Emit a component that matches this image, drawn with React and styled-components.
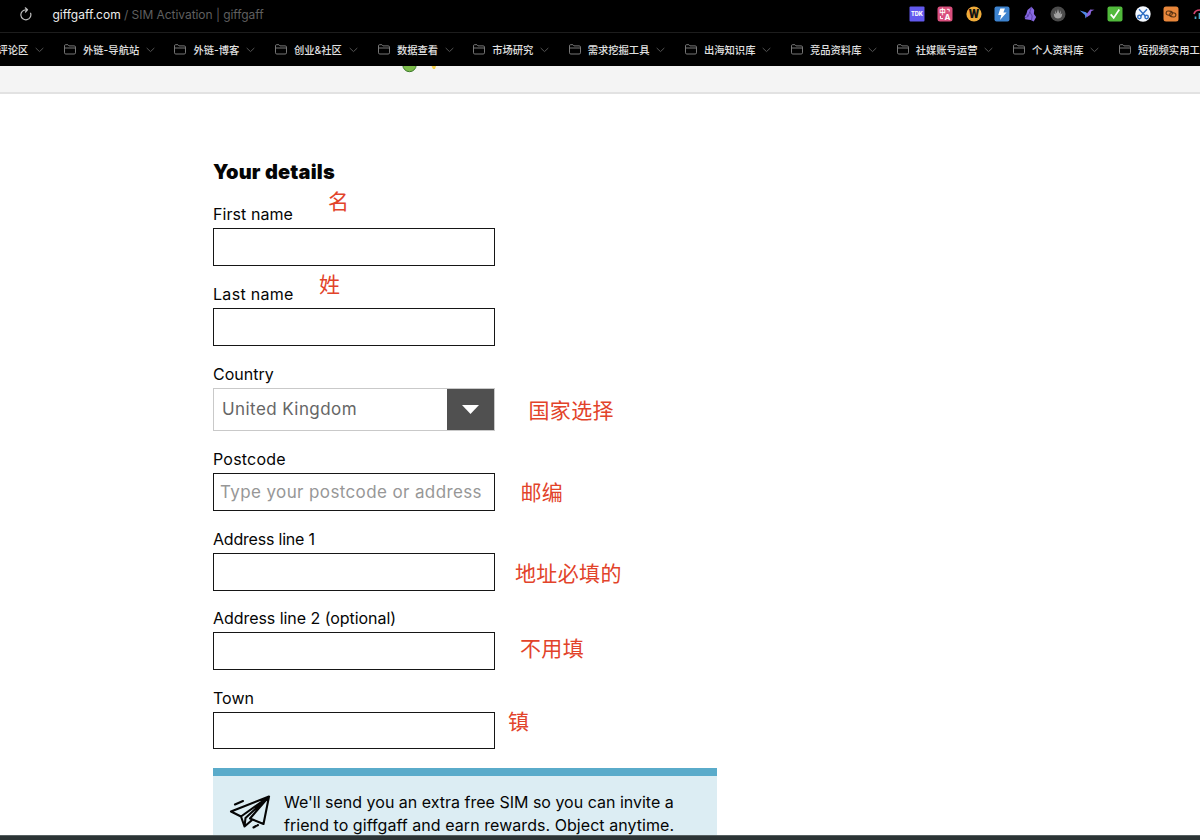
import React from "react";
import styled, { createGlobalStyle } from "styled-components";

const GlobalStyle = createGlobalStyle`
  * {
    box-sizing: border-box;
  }

  body {
    margin: 0;
    background: #fff;
    color: #050505;
    font-family: Inter, "Noto Sans CJK SC", sans-serif;
  }
`;

const Window = styled.div`
  display: flex;
  flex-direction: column;
  height: 840px;
  overflow: hidden;
`;

// Browser chrome

const AddressBar = styled.div`
  display: flex;
  flex: none;
  align-items: center;
  height: 33px;
  padding: 0 0 4px 19px;
  background: #000;
  border-bottom: 1px solid #1d1d1d;
  font-size: 12px;
  white-space: pre;
`;

const Url = styled.span`
  margin-left: 19.5px;
  color: #ededed;
`;

const PageTitle = styled.span`
  color: #5f5f5f;
  letter-spacing: -0.05px;
`;

const Extensions = styled.div`
  display: flex;
  flex: none;
  gap: 12.25px;
  margin: 0 -7.5px 0 auto;

  svg {
    display: block;
  }
`;

const BookmarksBar = styled.nav`
  display: flex;
  flex: none;
  height: 33px;
  align-items: center;
  padding-left: 64px;
  background: #000;
  overflow: hidden;
`;

const Bookmark = styled.div`
  display: flex;
  flex: none;
  align-items: center;
  width: ${(props) => props.$width}px;
  margin-left: ${(props) => (props.$first ? "-85.5px" : "0")};
  color: #e0e0e0;
  font-size: 10.3px;
  font-weight: 500;
  line-height: 16px;
  white-space: nowrap;

  span {
    margin: 0 7px;
  }
`;

// Page

const SiteHeader = styled.header`
  display: flex;
  flex: none;
  height: 28px;
  padding-left: 402px;
  background: #f4f4f4;
  border-bottom: 2px solid #e2e2e2;
`;

const Main = styled.main`
  flex: 1;
  min-height: 0;
  padding: 66px 0 0 213px;
  overflow: hidden;
`;

const Heading = styled.h1`
  margin: 0 0 19px;
  font-size: 20px;
  font-weight: 900;
  line-height: 24px;
  letter-spacing: 0.2px;
`;

const Field = styled.div`
  position: relative;
  width: 282px;
  margin-bottom: ${(props) => props.$gap || 17}px;
`;

const Label = styled.label`
  display: block;
  height: 25px;
  font-size: 16px;
  line-height: 23px;
  letter-spacing: ${(props) => props.$spacing || 0}px;
`;

const Input = styled.input`
  display: block;
  width: 100%;
  height: ${(props) => props.$height || 38}px;
  padding: 0 6px 1px;
  background: #fff;
  border: 1px solid #161616;
  border-radius: 0;
  font-family: inherit;
  font-size: 17px;
  letter-spacing: 0.38px;

  &::placeholder {
    color: #979797;
    opacity: 1;
  }
`;

const Select = styled.div`
  display: flex;
  height: 43px;
  border: 1px solid #c9c9c9;
  color: #666;
  font-size: 17px;
  line-height: 40px;
  letter-spacing: 0.42px;
`;

const SelectValue = styled.span`
  flex: 1;
  padding-left: 8px;
`;

const SelectArrow = styled.span`
  display: flex;
  align-items: center;
  justify-content: center;
  width: 47px;
  background: #505050;
`;

const Note = styled.span`
  position: absolute;
  left: ${(props) => props.$left}px;
  top: ${(props) => props.$top}px;
  color: #e2432a;
  font-family: "Noto Sans CJK SC", sans-serif;
  font-size: 21px;
  line-height: 30px;
  letter-spacing: 0.35px;
  white-space: nowrap;
`;

const Banner = styled.section`
  display: flex;
  width: 504px;
  height: 67px;
  padding: 16px 0 0 16px;
  background: #dcedf3;
  border-top: 8px solid #5aabca;
`;

const BannerText = styled.p`
  margin: -1px 0 0 12px;
  font-size: 16px;
  line-height: 22.5px;
  white-space: nowrap;
`;

const WideLine = styled.span`
  letter-spacing: 0.055px;
`;

const BottomEdge = styled.footer`
  flex: none;
  height: 5px;
  background: #2c3435;
  border-top: 1px solid #566061;
`;

const bookmarks = [
  { name: "评论区", width: 85.5 },
  { name: "外链-导航站", width: 110.4 },
  { name: "外链-博客", width: 100.5 },
  { name: "创业&社区", width: 103 },
  { name: "数据查看", width: 95.3 },
  { name: "市场研究", width: 95.5 },
  { name: "需求挖掘工具", width: 116.3 },
  { name: "出海知识库", width: 106 },
  { name: "竞品资料库", width: 105.7 },
  { name: "社媒账号运营", width: 116.3 },
  { name: "个人资料库", width: 106 },
  { name: "短视频实用工", width: 116.5 },
];

const FolderIcon = () => (
  <svg width="12" height="11" viewBox="0 0 12 11" fill="none" stroke="#858585" strokeWidth="0.9">
    <path d="M.5 8.8V1.8Q.5.7 1.6.7h2.3l1.1 1.2h5.2q1.3 0 1.3 1.2v5.7q0 1.2-1.3 1.2H1.8Q.5 10 .5 8.8ZM.5 4h11" />
  </svg>
);

const ChevronIcon = () => (
  <svg width="9" height="6" viewBox="0 0 9 6" fill="none" stroke="#555" strokeWidth="1">
    <path d="M.7 1 4.5 4.6 8.3 1" />
  </svg>
);

const ReloadIcon = () => (
  <svg width="14" height="14" viewBox="0 0 14 14" fill="none" stroke="#bdbdbd" strokeWidth="1.2" strokeLinecap="round" strokeLinejoin="round">
    <path d="M11.6 6.2A5 5 0 1 1 7 2.8h1.3M6.3.8l2.2 2-2 2.2" />
  </svg>
);

const PlaneIcon = () => (
  <svg width="43" height="37" viewBox="0 0 43 37" fill="none" stroke="#050505" strokeWidth="2.1" strokeLinejoin="round" strokeLinecap="round">
    <path d="M40 4.5 2 19.5 12 24.5ZM12 24.5 15.5 34.5 22.5 28.5M40 4.5 16.5 26 15.5 34.5M40 4.5 34.5 32 21 26.5Z" />
    <path d="M6 12.5 14 9M24.5 35.5l2.5-1.5M29 33l-.5.3" />
  </svg>
);

const ExtensionIcons = () => (
  <Extensions>
    <svg width="16" height="16" viewBox="0 0 16 16">
      <rect x=".5" y=".5" width="15" height="15" rx="1" fill="#6259ee" />
      <text x="8" y="10.2" fill="#fff" fontSize="5.6" fontWeight="800" textAnchor="middle">TDK</text>
    </svg>
    <svg width="16" height="16" viewBox="0 0 16 16">
      <rect x=".5" y=".5" width="15" height="15" rx="2.5" fill="#d94f7d" />
      <text x="5.4" y="7.8" fill="#fff" fontSize="6.5" fontWeight="700" textAnchor="middle">中</text>
      <text x="10.6" y="13.6" fill="#fff" fontSize="8" fontWeight="700" textAnchor="middle">A</text>
      <path d="M9.8 3.3h2.4v2.2M3.4 10v2.6H6" fill="none" stroke="#fff" strokeWidth="1" />
    </svg>
    <svg width="16" height="16" viewBox="0 0 16 16">
      <circle cx="8" cy="8" r="7.6" fill="#f0ac3a" />
      <text x="8" y="12.3" fill="#111" fontSize="12" fontWeight="900" textAnchor="middle" textLength="10.5" lengthAdjust="spacingAndGlyphs">W</text>
    </svg>
    <svg width="16" height="16" viewBox="0 0 16 16">
      <rect x=".5" y=".5" width="15" height="15" rx="2" fill="#3d83cf" />
      <path d="M6.3 2.5h4.6L9.4 6.4h3.2L6 14l1.3-5H4.2Z" fill="#fff" />
    </svg>
    <svg width="16" height="16" viewBox="0 0 16 16">
      <path d="M9.5.7 12.2 4l-.3 4 2.3 3-2.5 4.5-3-1.5-5.5-.7-.5-2.5L4.5 7.5 5.5 4Z" fill="#8668e0" />
      <path d="M9.5.7 7.8 6l2.4 4-.7 4.2M4.5 7.5 6 10.5l-3.5 1.5M7.8 6 6 10.5" fill="none" stroke="#3f2a85" strokeWidth=".6" />
    </svg>
    <svg width="16" height="16" viewBox="0 0 16 16">
      <circle cx="8" cy="8" r="7.5" fill="#4b4b4b" />
      <path d="M3.7 7.2 5.5 8.5 5 4.2l1.7 3.3L8 3l1.3 4.5L11 4.2l-.5 4.3 1.8-1.3-.6 3.3Q10.7 12.5 8 12.5 5.3 12.5 4.3 10.5Z" fill="#a2a2a2" />
    </svg>
    <svg width="16" height="16" viewBox="0 0 16 16">
      <path d="M.7 4.4 7 6.2l1.9 2.3-2.4 4-.6-3.6Z" fill="#5089e8" />
      <path d="m8 7.5 3.2-3.9 4.3.2-3.2 1.5-.9 3.4-4 2.8Z" fill="#8a63d8" />
    </svg>
    <svg width="16" height="16" viewBox="0 0 16 16">
      <rect x=".5" y=".5" width="15" height="15" rx="2" fill="#51ba3c" />
      <path d="m3.7 8.4 3 3.5 5.6-8.3" fill="none" stroke="#fff" strokeWidth="1.7" />
    </svg>
    <svg width="16" height="16" viewBox="0 0 16 16">
      <circle cx="8" cy="8" r="7.7" fill="#f5f9ff" />
      <g fill="none" stroke="#2f6fc4" strokeWidth="1.4">
        <path d="m4 3.3 6.5 7M12 3.3l-6.5 7" />
        <circle cx="4.4" cy="11" r="1.7" />
        <circle cx="11.6" cy="11" r="1.7" />
      </g>
    </svg>
    <svg width="16" height="16" viewBox="0 0 16 16">
      <rect x=".5" y=".5" width="15" height="15" rx="2.5" fill="#e9873b" />
      <g fill="none" stroke="#5a3312" strokeWidth="1.1" transform="rotate(10 8 8)">
        <rect x="3" y="5.5" width="6.3" height="4" rx="2" />
        <rect x="6.7" y="6.5" width="6.3" height="4" rx="2" />
      </g>
    </svg>
    <svg width="16" height="16" viewBox="0 0 16 16" fill="none" strokeWidth="1.7">
      <path d="M2 8Q3 4 8 4" stroke="#d2446d" />
      <path d="M3.5 13v-2.5M7.5 13V7" stroke="#49a9c9" />
    </svg>
  </Extensions>
);

const App = () => {
  return (
    <Window>
      <GlobalStyle />
      <AddressBar>
        <ReloadIcon />
        <Url>giffgaff.com</Url>
        <PageTitle> / SIM Activation | giffgaff</PageTitle>
        <ExtensionIcons />
      </AddressBar>
      <BookmarksBar>
        {bookmarks.map((item, i) => (
          <Bookmark key={item.name} $width={item.width} $first={i === 0}>
            <FolderIcon />
            <span>{item.name}</span>
            <ChevronIcon />
          </Bookmark>
        ))}
      </BookmarksBar>
      <SiteHeader>
        <svg width="40" height="8" viewBox="0 0 40 8">
          <circle cx="7.5" cy="-1" r="6.7" fill="#7cbb4a" stroke="#3d7a2e" />
          <path d="M29.5 0h4.5l-1 3h-2Z" fill="#f3cf4a" />
        </svg>
      </SiteHeader>

      <Main>
        <Heading>Your details</Heading>
        <Field>
          <Label htmlFor="first" $spacing={0.07}>First name</Label>
          <Input id="first" />
          <Note $left={115} $top={-18}>名</Note>
        </Field>
        <Field>
          <Label htmlFor="last" $spacing={0.3}>Last name</Label>
          <Input id="last" />
          <Note $left={106} $top={-15}>姓</Note>
        </Field>
        <Field>
          <Label>Country</Label>
          <Select>
            <SelectValue>United Kingdom</SelectValue>
            <SelectArrow>
              <svg width="17" height="9" viewBox="0 0 17 9">
                <path d="M0 0h17L8.5 9Z" fill="#fff" />
              </svg>
            </SelectArrow>
          </Select>
          <Note $left={315.5} $top={31}>国家选择</Note>
        </Field>
        <Field $gap={16.5}>
          <Label htmlFor="postcode" $spacing={0.2}>Postcode</Label>
          <Input id="postcode" placeholder="Type your postcode or address" />
          <Note $left={307.5} $top={28}>邮编</Note>
        </Field>
        <Field $gap={16.5}>
          <Label htmlFor="line1" $spacing={-0.2}>Address line 1</Label>
          <Input id="line1" />
          <Note $left={302} $top={29}>地址必填的</Note>
        </Field>
        <Field>
          <Label htmlFor="line2" $spacing={-0.05}>Address line 2 (optional)</Label>
          <Input id="line2" />
          <Note $left={307} $top={25}>不用填</Note>
        </Field>
        <Field $gap={19}>
          <Label htmlFor="town">Town</Label>
          <Input id="town" $height={37} />
          <Note $left={295} $top={18}>镇</Note>
        </Field>
        <Banner>
          <PlaneIcon />
          <BannerText>
            We'll send you an extra free SIM so you can invite a
            <br />
            <WideLine>friend to giffgaff and earn rewards. Object anytime.</WideLine>
          </BannerText>
        </Banner>
      </Main>
      <BottomEdge />
    </Window>
  );
};

export default App;
